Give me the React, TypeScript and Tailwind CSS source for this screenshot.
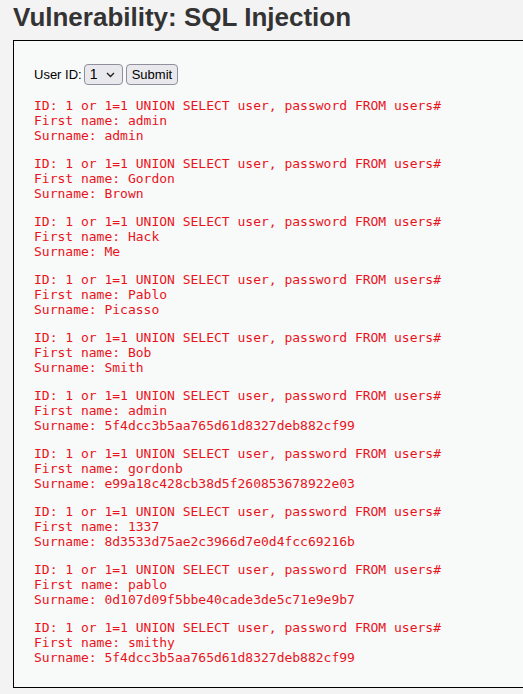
import React from "react";

const rows: [string, string][] = [
  ["admin", "admin"],
  ["Gordon", "Brown"],
  ["Hack", "Me"],
  ["Pablo", "Picasso"],
  ["Bob", "Smith"],
  ["admin", "5f4dcc3b5aa765d61d8327deb882cf99"],
  ["gordonb", "e99a18c428cb38d5f260853678922e03"],
  ["1337", "8d3533d75ae2c3966d7e0d4fcc69216b"],
  ["pablo", "0d107d09f5bbe40cade3de5c71e9e9b7"],
  ["smithy", "5f4dcc3b5aa765d61d8327deb882cf99"],
];

export default function App() {
  return (
    <div className="w-[523px] h-[694px] overflow-hidden bg-[#f3f3f3] font-['Liberation_Sans',Arial,sans-serif] text-[13px]">
      <div className="pl-[13px] pt-0">
        <h1 className="text-[26px] font-bold text-[#333] leading-[34px] pt-0 mb-[6px]">
          Vulnerability: SQL Injection
        </h1>
        <div className="w-[600px] border border-black bg-[#f8f9f9] px-[20px] pt-[10px] pb-[9px]">
          <div className="mt-[13px] mb-[13px] flex items-center h-[21px] text-[13px] text-black">
            <span>User ID:</span>
            <div className="ml-[2px] w-[39px] h-[21px] rounded-[4px] border border-[#8f8f9d] bg-[#e9e9ed] flex items-center pl-[5px] text-[13px]">
              <span className="text-[14px]">1</span>
              <svg className="ml-[9px]" width="9" height="6" viewBox="0 0 9 6">
                <path d="M1 1 L4.5 4.5 L8 1" fill="none" stroke="#222" strokeWidth="1.4" />
              </svg>
            </div>
            <button className="ml-[3px] h-[21px] px-[5px] rounded-[4px] border border-[#8f8f9d] bg-[#e9e9ed] text-[13px] text-black leading-none">
              Submit
            </button>
          </div>
          {rows.map(([f, s], i) => (
            <pre
              key={i}
              className="font-['DejaVu_Sans_Mono',monospace] text-[13px] leading-[15px] text-[#e8141c] my-[13px]"
            >
              {"ID: 1 or 1=1 UNION SELECT user, password FROM users#\n"}
              {`First name: ${f}\n`}
              {`Surname: ${s}`}
            </pre>
          ))}
        </div>
      </div>
    </div>
  );
}
